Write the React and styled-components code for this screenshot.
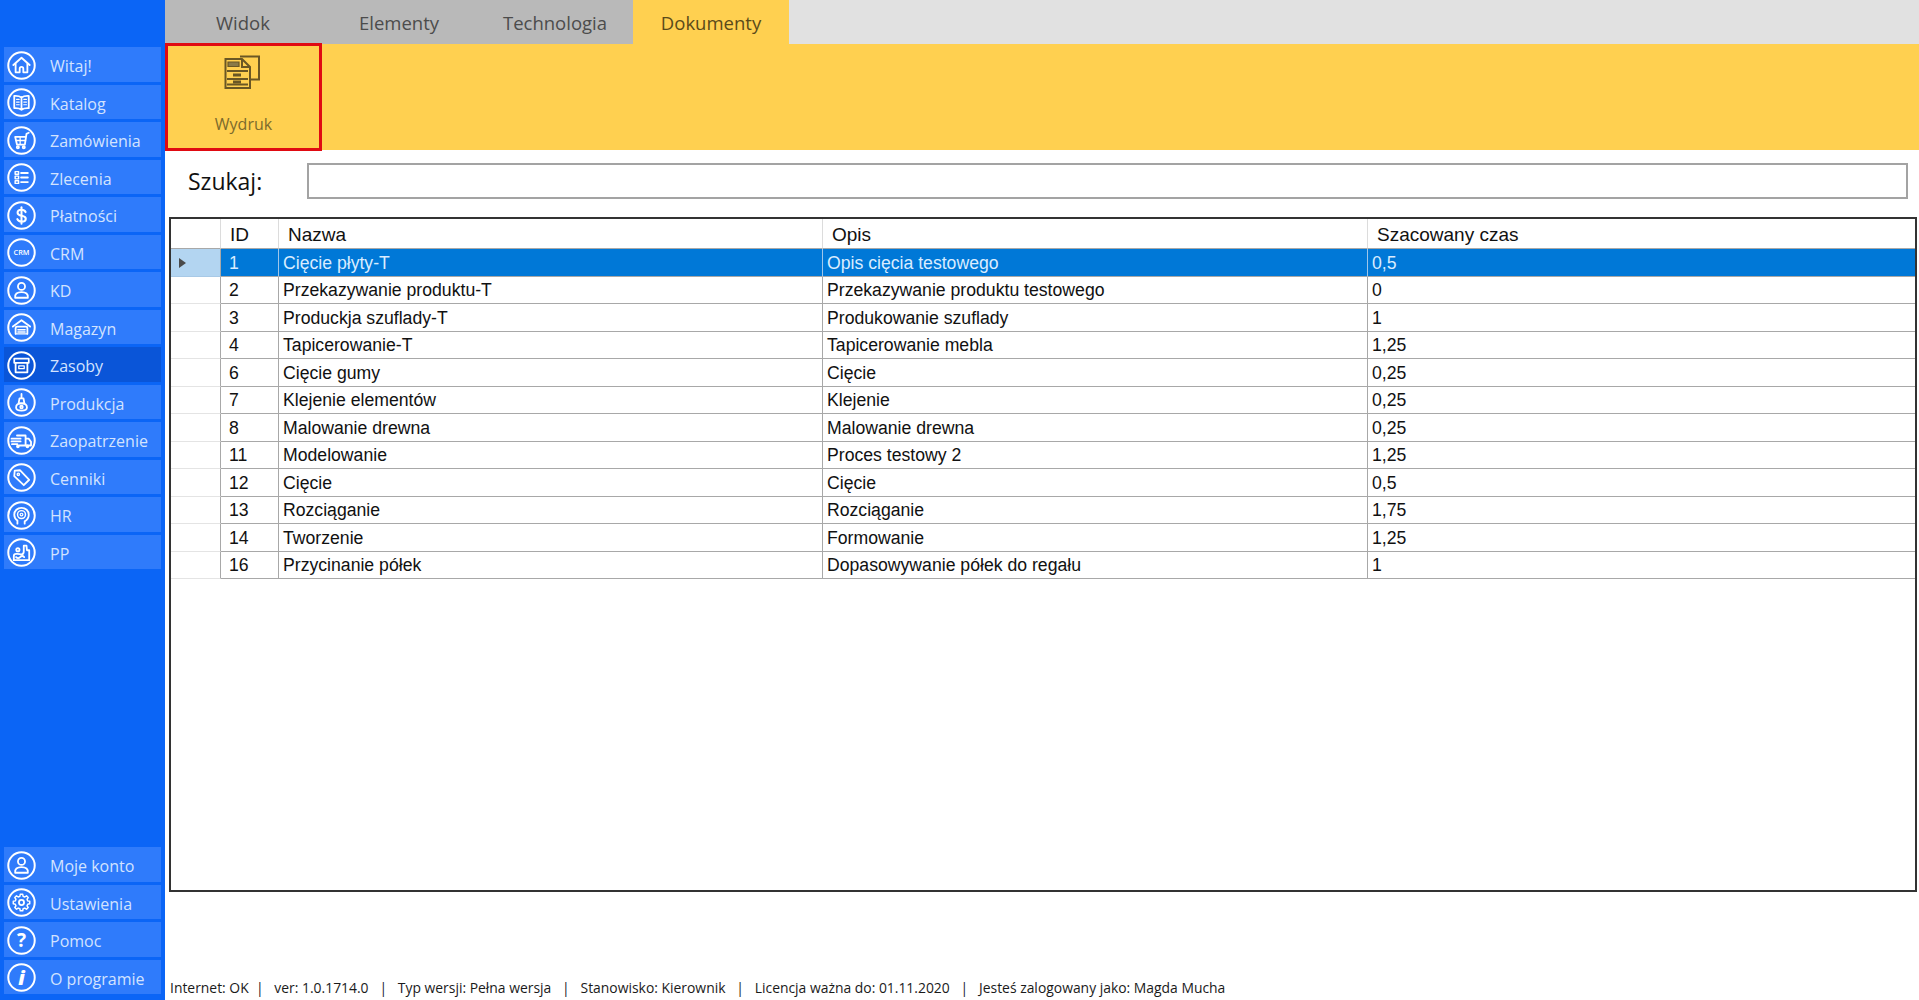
import React from "react";
import styled, { createGlobalStyle } from "styled-components";

const Global = createGlobalStyle`
  html, body { margin: 0; padding: 0; background: #fff; }
  #root { width: 1919px; height: 1000px; overflow: hidden; }
`;

const Page = styled.div`
  position: relative; width: 1919px; height: 1000px; display: flex;
  background: #fff; font-family: "Open Sans", sans-serif;
`;

const Sidebar = styled.nav`
  width: 165px; height: 1000px; flex: none; background: #0b65f6; box-sizing: border-box;
  padding: 47px 4px 6px; display: flex; flex-direction: column; justify-content: space-between;
`;
const NavGroup = styled.div`
  display: flex; flex-direction: column; gap: 3px;
`;
const NavItem = styled.div`
  position: relative; height: 34.5px; background: ${p => (p.$active ? "#0a55d8" : "#2f7bfb")};
  color: #d3e3ff; font-size: 16px; line-height: 38.5px; padding-left: 46px;
  svg { position: absolute; left: 2.5px; top: 3.5px; width: 29px; height: 29px; }
`;

const Main = styled.main`
  flex: 1; min-width: 0; position: relative; display: flex; flex-direction: column;
`;
const TabBar = styled.div`
  height: 44px; display: flex; background: #e1e1e1;
`;
const Tab = styled.div`
  width: 156px; text-align: center; font-size: 18.5px; line-height: 45px;
  background: ${p => (p.$active ? "#ffd050" : "#b9b9b9")};
  color: ${p => (p.$active ? "#5a4a1a" : "#4c4c4c")};
`;
const Ribbon = styled.div`
  height: 106px; background: #ffd050; display: flex;
`;
const RibbonButton = styled.div`
  width: 157px; height: 108px; margin-top: -1px; box-sizing: border-box; border: 3px solid #e00a12;
  margin-bottom: -1px; display: flex; flex-direction: column; align-items: center;
  color: #7c6a2c; font-size: 16px; position: relative; z-index: 1;
  svg { position: absolute; left: 56px; top: 4.5px; width: 38px; height: 38px; }
  span { position: absolute; top: 66px; left: 0; right: 0; text-align: center; line-height: 24px; }
`;
const SearchRow = styled.div`
  position: absolute; top: 163px; left: 0; right: 0; height: 36px;
`;
const SearchLabel = styled.label`
  position: absolute; left: 23px; top: 0; line-height: 36px; font-size: 23px; color: #111;
`;
const SearchInput = styled.div`
  position: absolute; left: 142px; width: 1601px; height: 36px; box-sizing: border-box;
  border: 2px solid #a3a3a3; background: #fff;
`;
const GridFrame = styled.div`
  position: absolute; left: 4px; top: 217px; width: 1748px; height: 675px; box-sizing: border-box;
  border: 2px solid #333; background: #fff;
`;
const Grid = styled.table`
  border-collapse: separate; border-spacing: 0; table-layout: fixed; width: 1744px;
  font-family: "Liberation Sans", Arial, sans-serif; color: #111;
`;
const HeadCell = styled.th`
  height: 30px; padding: 2px 0 0 9px; box-sizing: border-box; text-align: left; font-weight: 400;
  font-size: 19px; border-right: 1px solid #dcdcdc; border-bottom: 1px solid #a8a8a8;
  &:last-child { border-right: 0; }
`;
const Cell = styled.td`
  height: 27.5px; padding: 2px 0 0 ${p => p.$pad || 4}px; box-sizing: border-box; font-size: 17.65px; white-space: nowrap;
  border-right: 1px solid ${p => (p.$sel ? "#9fc6ea" : "#a8a8a8")}; border-bottom: 1px solid #a8a8a8;
  background: ${p => (p.$sel ? "#0078d7" : "#fff")}; color: ${p => (p.$sel ? "#d9ecff" : "#111")};
  &:last-child { border-right: 0; }
`;
const RowHead = styled.td`
  height: 27.5px; padding: 0; box-sizing: border-box; position: relative;
  border-right: 1px solid #a8a8a8; border-bottom: 1px solid ${p => (p.$sel ? "#a8c9e6" : "#e4e4e4")};
  background: ${p => (p.$sel ? "#b3d5f1" : "#fff")};
  i { position: absolute; left: 8px; top: 9px; width: 0; height: 0;
    border-left: 7px solid #4a4a4a; border-top: 5px solid transparent; border-bottom: 5px solid transparent; }
`;
const StatusBar = styled.div`
  position: absolute; left: 5px; top: 978px; line-height: 20px; font-size: 13.9px; color: #1a1a1a; white-space: pre;
`;

const S = { fill: "none", stroke: "#fff", strokeWidth: 2, strokeLinecap: "round", strokeLinejoin: "round" };
const Ring = ({ children }) => (
  <svg viewBox="0 0 32 32">
    <circle cx="16" cy="16" r="14.6" fill="none" stroke="#fff" strokeWidth="2.2" />
    <g {...S}>{children}</g>
  </svg>
);
const GlyphText = ({ size, y, x = 16, children, weight = 700, italic }) => (
  <text x={x} y={y} textAnchor="middle" fontSize={size} fontWeight={weight} fontStyle={italic ? "italic" : "normal"} fontFamily="Open Sans, sans-serif" fill="#fff" stroke="none">{children}</text>
);

const icons = {
  home: <><path d="M7 15.500 16 7.500l9 8" /><path d="M9.500 14v9.500h4.500v-4a2 2 0 0 1 4 0v4h4.500V14" /></>,
  book: <><path d="M16 10.500c-2.200-1.700-4.800-2-8-1.800v13.500c3.200-.2 5.800.1 8 1.800 2.200-1.700 4.800-2 8-1.800V8.700c-3.200-.2-5.800.1-8 1.800zM16 10.500v13.500" /><path d="M10.500 12.500h3M10.500 15.500h3M10.500 18.500h3M18.500 12.500h3M18.500 15.500h3M18.500 18.500h3" strokeWidth="1.300"/></>,
  cart: <><path d="M24 7.500 21.500 8.700l-1.800 11.800H11L9 12h12" /><circle cx="12" cy="23.500" r="1.200" /><circle cx="18.500" cy="23.500" r="1.200" /><path d="M10 16h10.500M14.500 12.500v7.500" strokeWidth="1.400" /></>,
  list: <><rect x="9" y="9.500" width="3.800" height="3" strokeWidth="1.600" /><rect x="9" y="14.500" width="3.800" height="3" strokeWidth="1.600" /><rect x="9" y="19.500" width="3.800" height="3" strokeWidth="1.600" /><path d="M15.500 11h7.500M15.500 16h7.500M15.500 21h7.500" /></>,
  dollar: <><path d="M20.500 12.200c-.8-1.700-2.400-2.500-4.500-2.500-2.500 0-4.300 1.200-4.300 3.200 0 4.800 9 2.200 9 6.600 0 2-1.900 3.200-4.600 3.200-2.200 0-4-.9-4.700-2.700" strokeWidth="2.300" /><path d="M16 7v18" strokeWidth="2.200" /></>,
  crm: <GlyphText size={8} y={18.800} weight={600}>CRM</GlyphText>,
  user: <><circle cx="16" cy="11.500" r="3.900" /><path d="M9 24c-.6-4.200 2-6.200 7-6.200s7.600 2 7 6.200z" /></>,
  garage: <><path d="M6.500 15 16 8l9.500 7" /><path d="M9.500 23v-6.500c0-.8.500-1.500 1.500-1.500h10c1 0 1.500.7 1.500 1.500V23" /><path d="M9.500 23h13M12 18.500h8M12 21h8" strokeWidth="1.500" /></>,
  box: <><rect x="8" y="8.500" width="16" height="4.500" strokeWidth="1.900" /><path d="M9.500 13v10.500h13V13" /><path d="M13 16.500h6v3h-6z" strokeWidth="1.400"/></>,
  lamp: <><path d="M16 6.500v5M13.800 11.500h4.400l1 5.500h-6.400z" /><path d="M10 21.500c0-3 2.500-4.500 6-4.500s6 1.500 6 4.500-2.500 3.500-6 3.500-6-.5-6-3.500z" /><circle cx="16" cy="21" r="1.400" /></>,
  truck: <><path d="M11 10.500h9.500v11h-7M20.500 14h3.500l2.500 3.500v4h-6" /><path d="M5 14h10M5 17h10M5.500 20h6" /><circle cx="12" cy="22.500" r="1" /><circle cx="22.500" cy="22.500" r="1" /></>,
  tag: <><path d="M8 14.500 8.500 8.500 14.500 8l10 10.500-6 6z" /><circle cx="12.500" cy="12.500" r="1.300" strokeWidth="1.500" /></>,
  head: <><path d="M11.500 25v-3.500c-2.200-1.500-3.500-3.700-3.500-6.300 0-4.500 3.500-7.700 8-7.700s8 3.200 8 7.700c0 3.800-2.500 6.200-4.500 7.300v2.500" /><circle cx="16" cy="15" r="4.400" strokeWidth="1.600" /><circle cx="16" cy="15" r="1.500" strokeWidth="1.300" /></>,
  pp: <><path d="M7.500 24.500v-4.500c0-1.500 1-2.500 2.500-2.500h1.500c1.800 0 3 .5 4.500.5s2.500-1 2.500-3V8.500h3l.5 5h2.500v11z" /><circle cx="12" cy="13" r="1.800" /><path d="M10 21c1.500 1.500 3 1.500 4.500 0s3-1.500 4.500 0" /></>,
  gear: <><circle cx="16" cy="16" r="2.800" /><path d="M14.500 7.500h3l.5 2.500 2 .8 2.100-1.400 2.100 2.100-1.400 2.100.8 2 2.500.5v3l-2.500.5-.8 2 1.400 2.100-2.100 2.100-2.100-1.400-2 .8-.5 2.500h-3l-.5-2.500-2-.8-2.100 1.400-2.100-2.100 1.400-2.100-.8-2-2.500-.5v-3l2.500-.5.8-2-1.400-2.100 2.100-2.100 2.100 1.400 2-.8z" transform="translate(1.600 .2) scale(.9)" strokeWidth="1.800" /></>,
  help: <GlyphText size={21} y={23.500}>?</GlyphText>,
  info: <GlyphText size={22} y={24} italic weight={800}>i</GlyphText>,
};

const topNav = [
  ["Witaj!", "home"], ["Katalog", "book"], ["Zamówienia", "cart"], ["Zlecenia", "list"],
  ["Płatności", "dollar"], ["CRM", "crm"], ["KD", "user"], ["Magazyn", "garage"],
  ["Zasoby", "box", true], ["Produkcja", "lamp"], ["Zaopatrzenie", "truck"], ["Cenniki", "tag"],
  ["HR", "head"], ["PP", "pp"],
];
const bottomNav = [["Moje konto", "user"], ["Ustawienia", "gear"], ["Pomoc", "help"], ["O programie", "info"]];

const rows = [
  ["1", "Cięcie płyty-T", "Opis cięcia testowego", "0,5"],
  ["2", "Przekazywanie produktu-T", "Przekazywanie produktu testowego", "0"],
  ["3", "Produckja szuflady-T", "Produkowanie szuflady", "1"],
  ["4", "Tapicerowanie-T", "Tapicerowanie mebla", "1,25"],
  ["6", "Cięcie gumy", "Cięcie", "0,25"],
  ["7", "Klejenie elementów", "Klejenie", "0,25"],
  ["8", "Malowanie drewna", "Malowanie drewna", "0,25"],
  ["11", "Modelowanie", "Proces testowy 2", "1,25"],
  ["12", "Cięcie", "Cięcie", "0,5"],
  ["13", "Rozciąganie", "Rozciąganie", "1,75"],
  ["14", "Tworzenie", "Formowanie", "1,25"],
  ["16", "Przycinanie półek", "Dopasowywanie półek do regału", "1"],
];

const Nav = ({ items }) => (
  <NavGroup>
    {items.map(([label, icon, active]) => (
      <NavItem key={label} $active={active}>
        <Ring>{icons[icon]}</Ring>
        {label}
      </NavItem>
    ))}
  </NavGroup>
);

export default function App() {
  return (
    <Page>
      <Global />
      <Sidebar>
        <Nav items={topNav} />
        <Nav items={bottomNav} />
      </Sidebar>
      <Main>
        <TabBar>
          <Tab>Widok</Tab>
          <Tab>Elementy</Tab>
          <Tab>Technologia</Tab>
          <Tab $active>Dokumenty</Tab>
        </TabBar>
        <Ribbon>
          <RibbonButton>
            <svg viewBox="0 0 38 38" fill="none" stroke="#6a5724" strokeWidth="2">
              <path d="M16 5.500h19v23h-9" />
              <path d="M1.500 8h16.500l8 8v21H1.500z" fill="#ffd050" />
              <path d="M18 8v8h8" />
              <path d="M4 11h11v4.500H4z" fill="#8a7a48" strokeWidth="1.200" />
              <path d="M3 20h21M3 28h21M3 33.500h21" strokeWidth="1.800" />
              <path d="M9 24h8M9 31h8" strokeWidth="2.800" />
            </svg>
            <span>Wydruk</span>
          </RibbonButton>
        </Ribbon>
        <SearchRow>
          <SearchLabel>Szukaj:</SearchLabel>
          <SearchInput />
        </SearchRow>
        <GridFrame>
          <Grid>
            <colgroup>
              <col style={{ width: 50 }} />
              <col style={{ width: 58 }} />
              <col style={{ width: 544 }} />
              <col style={{ width: 545 }} />
              <col />
            </colgroup>
            <thead>
              <tr>
                <HeadCell />
                <HeadCell>ID</HeadCell>
                <HeadCell>Nazwa</HeadCell>
                <HeadCell>Opis</HeadCell>
                <HeadCell>Szacowany czas</HeadCell>
              </tr>
            </thead>
            <tbody>
              {rows.map((r, i) => (
                <tr key={r[0]}>
                  <RowHead $sel={i === 0}>{i === 0 && <i />}</RowHead>
                  {r.map((c, j) => (
                    <Cell key={j} $sel={i === 0} $pad={j === 0 ? 8 : 4}>{c}</Cell>
                  ))}
                </tr>
              ))}
            </tbody>
          </Grid>
        </GridFrame>
        <StatusBar>{"Internet: OK  |   ver: 1.0.1714.0   |   Typ wersji: Pełna wersja   |   Stanowisko: Kierownik   |   Licencja ważna do: 01.11.2020   |   Jesteś zalogowany jako: Magda Mucha"}</StatusBar>
      </Main>
    </Page>
  );
}
